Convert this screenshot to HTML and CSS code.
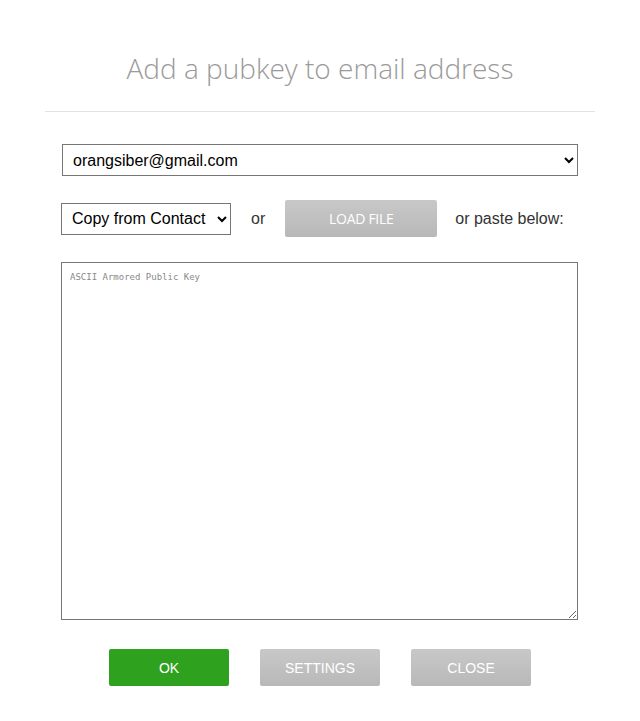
FILE: index.html
```html
<!DOCTYPE html>
<html lang="en">

<head>
    <meta charset="UTF-8">
    <meta name="viewport" content="width=device-width, initial-scale=1.0">
    <title>Add a pubkey</title>
    <link rel="stylesheet" href="styles.css">
</head>

<body>
    <div class="dialog">
        <h1 class="title">Add a pubkey to email address</h1>
        <div class="form">
            <select class="email">
                <option>orangsiber@gmail.com</option>
            </select>
            <div class="source">
                <select class="contact">
                    <option>Copy from Contact</option>
                </select>
                <span class="or">or</span>
                <button class="loadbtn">LOAD FILE</button>
                <span class="paste">or paste below:</span>
            </div>
            <textarea class="pubkey" placeholder="ASCII Armored Public Key"></textarea>
        </div>
        <div class="actions">
            <button class="btn ok">OK</button>
            <button class="btn">SETTINGS</button>
            <button class="btn">CLOSE</button>
        </div>
    </div>
</body>

</html>
```

FILE: styles.css
```css
* {
    margin: 0;
    padding: 0;
    box-sizing: border-box;
}

body {
    font-family: "Liberation Sans", Arial, sans-serif;
    background-color: #fff;
}

.dialog {
    width: 550px;
    margin: 0 45px;
}

.title {
    font-family: "Open Sans", sans-serif;
    font-weight: 300;
    font-size: 28px;
    color: #9a9a9a;
    text-align: center;
    padding-top: 49px;
    height: 112px;
    border-bottom: 1px solid #e2e2e2;
}

.form {
    padding: 32px 17px 0 16px;
}

.email {
    display: block;
    height: 32px;
    margin-left: 1px;
    width: 516px;
    font-family: "Liberation Sans", Arial, sans-serif;
    font-size: 16px;
    padding-left: 6px;
    border: 1px solid #767676;
    background: #fff;
    color: #000;
}

.source {
    display: flex;
    align-items: center;
    margin-top: 24px;
    height: 37px;
}

.contact {
    width: 170px;
    height: 32px;
    font-family: "Liberation Sans", Arial, sans-serif;
    font-size: 16px;
    padding-left: 6px;
    border: 1px solid #767676;
    background: #fff;
    color: #000;
}

.or {
    font-size: 16px;
    margin-left: 20px;
    color: #333;
}

.loadbtn {
    width: 152px;
    height: 37px;
    margin-left: 20px;
    border: none;
    border-radius: 2px;
    background: linear-gradient(#c8c8c8, #b8b8b8);
    color: #fff;
    font-family: "Open Sans", sans-serif;
    font-size: 14px;
    letter-spacing: -0.3px;
}

.paste {
    font-size: 16px;
    margin-left: 18px;
    color: #333;
}

.pubkey {
    display: block;
    width: 517px;
    height: 358px;
    margin-top: 25px;
    border: 1px solid #767676;
    padding: 9px 8px;
    font-family: "DejaVu Sans Mono", monospace;
    font-size: 9px;
    resize: vertical;
}

.pubkey::placeholder {
    color: #888;
}

.actions {
    display: flex;
    justify-content: center;
    gap: 31px;
    margin-top: 29px;
}

.btn {
    width: 120px;
    height: 37px;
    border: none;
    border-radius: 2px;
    background: linear-gradient(#c8c8c8, #b8b8b8);
    color: #fff;
    font-family: "Liberation Sans", Arial, sans-serif;
    font-size: 14px;
}

.btn.ok {
    background: #2ea11f;
}
```
